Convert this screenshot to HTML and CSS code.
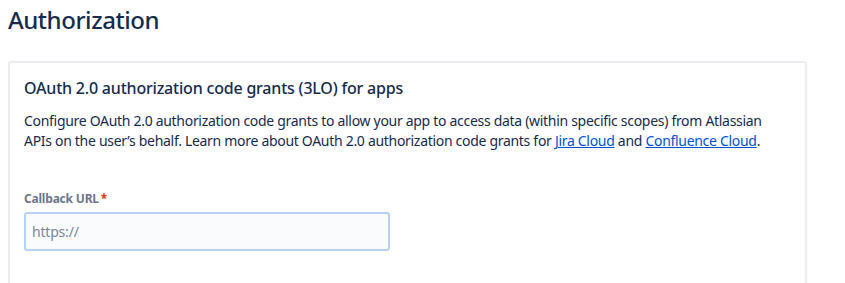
FILE: index.html
```html
<!DOCTYPE html>
<html lang="en">
<head>
<meta charset="utf-8">
<title>Authorization</title>
<link rel="stylesheet" href="styles.css">
</head>
<body>
<main class="page">
  <h1 class="page-title">Authorization</h1>
  <section class="card">
    <h2 class="card-title">OAuth 2.0 authorization code grants (3LO) for apps</h2>
    <p class="card-text">Configure OAuth 2.0 authorization code grants to allow your app to access data (within specific scopes) from Atlassian APIs on the user’s behalf. Learn more about OAuth 2.0 authorization code grants for <a href="#" class="link">Jira Cloud</a> and <a href="#" class="link">Confluence Cloud</a>.</p>
    <div class="field">
      <label class="field-label" for="cb">Callback URL<span class="req">*</span></label>
      <input class="field-input" id="cb" type="text" placeholder="https://">
    </div>
  </section>
</main>
</body>
</html>
```
FILE: styles.css
```css
html, body {
  margin: 0;
  padding: 0;
  background: #ffffff;
}
body {
  font-family: "Noto Sans", "Open Sans", sans-serif;
  color: #172B4D;
  overflow: hidden;
}
.page {
  padding: 6px 8px 0 8px;
}
.page-title {
  margin: 0;
  font-size: 24px;
  line-height: 28px;
  font-weight: 500;
  letter-spacing: -0.45px;
  color: #172B4D;
}
.card {
  margin-top: 27px;
  min-height: 260px;
  border: 2px solid #EBECF0;
  border-radius: 3px;
  padding: 15px 14px;
  box-sizing: border-box;
  width: 799px;
}
.card-title {
  margin: 0;
  font-size: 16px;
  line-height: 20px;
  font-weight: 500;
  letter-spacing: -0.2px;
  color: #172B4D;
}
.card-text {
  margin: 13px 0 0 0;
  font-size: 14px;
  line-height: 20px;
  letter-spacing: -0.3px;
  color: #172B4D;
}
.link {
  color: #0052CC;
  text-decoration: underline;
}
.field {
  margin-top: 40px;
  display: flex;
  flex-direction: column;
  gap: 5px;
}
.field-label {
  font-size: 12px;
  line-height: 16px;
  font-weight: 700;
  letter-spacing: -0.2px;
  color: #6B778C;
}
.req {
  color: #DE350B;
  padding-left: 2px;
}
.field-input {
  width: 366px;
  height: 39px;
  box-sizing: border-box;
  border: 2px solid #B8D2F4;
  border-radius: 3px;
  background: #FAFBFC;
  padding: 0 6px;
  font-family: inherit;
  font-size: 14px;
  letter-spacing: -0.2px;
  color: #172B4D;
  outline: none;
}
.field-input::placeholder {
  color: #7A869A;
}
```
